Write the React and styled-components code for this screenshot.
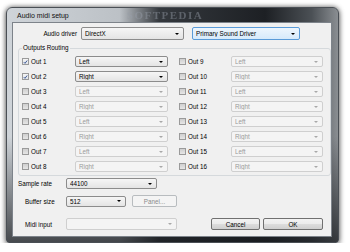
import React from 'react';
import styled, { createGlobalStyle, css } from 'styled-components';

const GlobalStyle = createGlobalStyle`
    html, body {
        margin: 0;
        padding: 0;
        background: #ffffff;
    }
    body {
        font-family: "Liberation Sans", Arial, sans-serif;
        font-size: 6.3px;
        color: #000;
    }
`;

const outputs = Array.from({ length: 16 }, (_, i) => ({
    name: `Out ${i + 1}`,
    channel: i % 2 === 0 ? 'Left' : 'Right',
    on: i < 2,
}));

const Combo = ({ value, width, height = 11, disabled, focused }) => (
    <ComboBox $width={width} $height={height} $disabled={disabled} $focused={focused}>
        <ComboText>{value}</ComboText>
        <Arrow $disabled={disabled} />
    </ComboBox>
);

const Check = ({ on }) => (
    <CheckBox $on={on}>
        {on && (
            <svg width="6" height="6" viewBox="0 0 6 6">
                <path d="M1 3.2 L2.4 4.6 L5 1.2" stroke="#2f4a8c" strokeWidth="1.1" fill="none" />
            </svg>
        )}
    </CheckBox>
);

const OutputColumn = ({ items, cellWidth, comboWidth }) => (
    <Column>
        {items.map((o) => (
            <OutRow key={o.name}>
                <OutLabel $width={cellWidth}>
                    <Check on={o.on} />
                    <span>{o.name}</span>
                </OutLabel>
                <Combo value={o.channel} width={comboWidth} disabled={!o.on} />
            </OutRow>
        ))}
    </Column>
);

export default function App() {
    return <>
        <GlobalStyle />
        <Page>
            <Window>
                <TitleBar>
                    <Title>Audio midi setup</Title>
                    <Watermark>SOFTPEDIA</Watermark>
                </TitleBar>
                <Client>
                    <DriverRow>
                        <DriverLabel>Audio driver</DriverLabel>
                        <Combo value="DirectX" width={103} height={13} />
                        <Combo value="Primary Sound Driver" width={108} height={13} focused />
                    </DriverRow>
                    <Group>
                        <Legend>Outputs Routing</Legend>
                        <Columns>
                            <OutputColumn items={outputs.slice(0, 8)} cellWidth={53} comboWidth={93} />
                            <OutputColumn items={outputs.slice(8)} cellWidth={52} comboWidth={92} />
                        </Columns>
                    </Group>
                    <FormRow $top={2}>
                        <FieldLabel $indent={5}>Sample rate</FieldLabel>
                        <Combo value="44100" width={91} />
                    </FormRow>
                    <FormRow $top={6}>
                        <FieldLabel $indent={12}>Buffer size</FieldLabel>
                        <Combo value="512" width={60} />
                        <Button $width={45} $disabled>Panel...</Button>
                    </FormRow>
                    <FormRow $top={11}>
                        <FieldLabel $indent={12}>Midi input</FieldLabel>
                        <Combo value="" width={111} height={12} disabled />
                        <Actions>
                            <Button $width={49}>Cancel</Button>
                            <Button $width={60}>OK</Button>
                        </Actions>
                    </FormRow>
                </Client>
            </Window>
        </Page>
    </>;
}

const Page = styled.div`
    padding: 7px 0 0 6px;
`;

const Window = styled.div`
    box-sizing: border-box;
    width: 333px;
    height: 236px;
    display: flex;
    flex-direction: column;
    padding: 0 6px 5px 5px;
    border: 1px solid #4a4f55;
    border-radius: 6px 6px 3px 3px;
    background:
        linear-gradient(to bottom, rgba(0, 0, 0, 0) 55%, rgba(25, 28, 32, 0.75) 100%),
        linear-gradient(to right, #cfd4d9 0%, #bcc1c6 34%, #34383d 46%, #1d2024 78%, #4b5055 92%, #8a8e92 100%);
    box-shadow: 0 0 5px rgba(0, 0, 0, 0.55), 0 2px 6px rgba(0, 0, 0, 0.35);
`;

const TitleBar = styled.div`
    height: 14px;
    display: flex;
    align-items: center;
    padding-left: 5px;
`;

const Title = styled.span`
    font-size: 7px;
    color: #111;
`;

const Watermark = styled.span`
    margin-left: 58px;
    font-family: "Liberation Serif", serif;
    font-weight: bold;
    font-size: 11px;
    line-height: 11px;
    letter-spacing: 1.5px;
    color: rgba(150, 158, 168, 0.45);
    filter: blur(0.6px);
`;

const Client = styled.div`
    flex: 1;
    box-sizing: border-box;
    background: #f0f0f0;
    border: 1px solid #7d838a;
    display: flex;
    flex-direction: column;
`;

const DriverRow = styled.div`
    display: flex;
    align-items: center;
    gap: 8px;
    margin-top: 4px;
`;

const DriverLabel = styled.span`
    width: 64px;
    text-align: right;
    margin-right: -4px;
`;

const ComboBox = styled.div`
    box-sizing: border-box;
    width: ${(p) => p.$width}px;
    height: ${(p) => p.$height}px;
    display: flex;
    align-items: center;
    padding: 0 3px 0 3px;
    border: 1px solid #8c8c8c;
    border-radius: 2px;
    background: linear-gradient(to bottom, #f6f6f6, #e4e4e4);
    color: #000;
    ${(p) => p.$focused && css`
        border-color: #5a9bd8;
        background: linear-gradient(to bottom, #eef6fd, #d6eafb);
    `}
    ${(p) => p.$disabled && css`
        border-color: #cfcfcf;
        background: #f4f4f4;
        color: #9a9a9a;
    `}
`;

const ComboText = styled.span`
    flex: 1;
    white-space: nowrap;
    overflow: hidden;
`;

const Arrow = styled.span`
    width: 0;
    height: 0;
    border-left: 2px solid transparent;
    border-right: 2px solid transparent;
    border-top: 2px solid ${(p) => (p.$disabled ? '#a8a8a8' : '#000')};
    margin-right: 1px;
`;

const Group = styled.fieldset`
    box-sizing: border-box;
    width: 313px;
    margin: 4px 0 0 5px;
    padding: 4px 0 3px 3px;
    border: 1px solid #d5d9dc;
    border-radius: 3px;
`;

const Legend = styled.legend`
    padding: 0 1px;
    margin-left: 0;
    line-height: 8px;
`;

const Columns = styled.div`
    display: flex;
    gap: 11px;
`;

const Column = styled.div`
    display: flex;
    flex-direction: column;
    gap: 4px;
`;

const OutRow = styled.div`
    display: flex;
    align-items: center;
    height: 11px;
`;

const OutLabel = styled.label`
    width: ${(p) => p.$width}px;
    display: flex;
    align-items: center;
    gap: 2px;
`;

const CheckBox = styled.span`
    box-sizing: border-box;
    width: 7px;
    height: 7px;
    display: flex;
    align-items: center;
    justify-content: center;
    border: 1px solid #9a9a9a;
    background: ${(p) => (p.$on ? 'linear-gradient(to bottom, #f4f4f4, #e2e6ea)' : 'linear-gradient(to bottom, #cfcfcf, #e6e6e6)')};
`;

const FormRow = styled.div`
    display: flex;
    align-items: center;
    margin-top: ${(p) => p.$top}px;
`;

const FieldLabel = styled.span`
    box-sizing: border-box;
    width: 53px;
    padding-left: ${(p) => p.$indent}px;
    white-space: nowrap;
`;

const Button = styled.div`
    box-sizing: border-box;
    width: ${(p) => p.$width}px;
    height: 12px;
    display: flex;
    align-items: center;
    justify-content: center;
    border: 1px solid #707070;
    border-radius: 2px;
    background: linear-gradient(to bottom, #f3f3f3 0%, #ebebeb 50%, #dddddd 51%, #cfcfcf 100%);
    color: #000;
    margin-left: ${(p) => (p.$disabled ? 6 : 0)}px;
    ${(p) => p.$disabled && css`
        border-color: #b8bcbf;
        background: #f4f4f4;
        color: #8a8a8a;
    `}
`;

const Actions = styled.div`
    display: flex;
    gap: 3px;
    margin-left: auto;
    margin-right: 8px;
`;
